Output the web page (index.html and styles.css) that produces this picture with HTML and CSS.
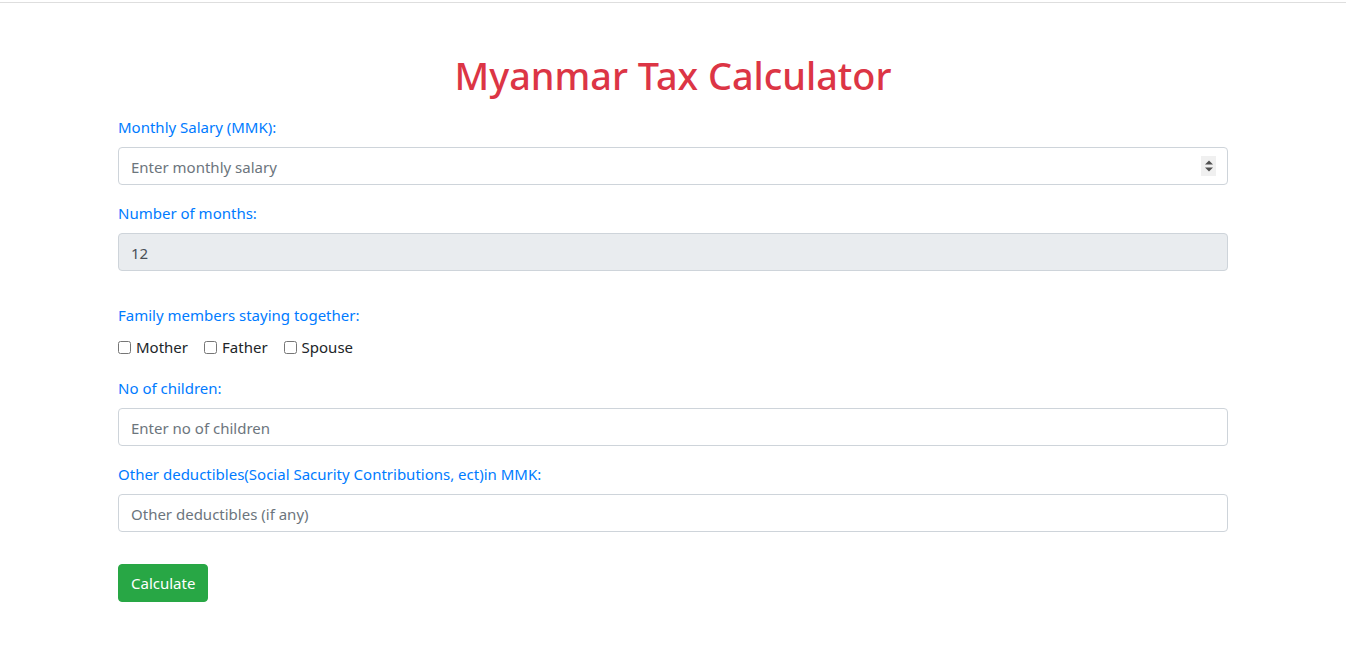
FILE: index.html
```html
<!DOCTYPE html>
<html lang="en">
<head>
<meta charset="utf-8">
<title>Myanmar Tax Calculator</title>
<link rel="stylesheet" href="styles.css">
</head>
<body>
<div class="topline"></div>
<div class="container">
  <h1 class="title">Myanmar Tax Calculator</h1>
  <form class="form">
    <div class="group">
      <label class="label" for="salary">Monthly Salary (MMK):</label>
      <div class="num-wrap">
        <input class="control" id="salary" type="text" placeholder="Enter monthly salary">
        <span class="spinner">
          <svg width="10" height="14" viewBox="0 0 10 14"><path d="M1 5.5 L5 1.5 L9 5.5 Z" fill="#505050"/><path d="M1 8.5 L5 12.5 L9 8.5 Z" fill="#505050"/></svg>
        </span>
      </div>
    </div>
    <div class="group group-wide">
      <label class="label" for="months">Number of months:</label>
      <input class="control control-readonly" id="months" type="text" value="12" readonly>
    </div>
    <div class="group">
      <label class="label">Family members staying together:</label>
      <div class="checks">
        <label class="check"><input type="checkbox" class="box"><span>Mother</span></label>
        <label class="check"><input type="checkbox" class="box"><span>Father</span></label>
        <label class="check"><input type="checkbox" class="box"><span>Spouse</span></label>
      </div>
    </div>
    <div class="group">
      <label class="label" for="children">No of children:</label>
      <input class="control" id="children" type="text" placeholder="Enter no of children">
    </div>
    <div class="group group-wide">
      <label class="label" for="other">Other deductibles(Social Sacurity Contributions, ect)in MMK:</label>
      <input class="control" id="other" type="text" placeholder="Other deductibles (if any)">
    </div>
    <button type="button" class="btn">Calculate</button>
  </form>
</div>
</body>
</html>
```

FILE: styles.css
```css
* { box-sizing: border-box; }
html, body { margin: 0; padding: 0; background: #fff; }
body {
  font-family: "Segoe UI", "Noto Sans", "Open Sans", sans-serif;
  font-size: 16px;
  line-height: 1.5;
  color: #212529;
}
.topline {
  height: 3px;
  border-bottom: 1px solid #dedede;
}
.container {
  width: 1140px;
  margin: 0 auto;
  padding: 0 15px;
}
.title {
  margin: 49px 0 16px;
  text-align: center;
  font-size: 37.8px;
  font-weight: 500;
  line-height: 47px;
  color: #dc3545;
}
.form { display: flex; flex-direction: column; align-items: stretch; }
.group { margin-bottom: 16px; display: flex; flex-direction: column; }
.group-wide { margin-bottom: 32px; }
.label {
  display: block;
  margin-bottom: 8px;
  color: #007bff;
  font-size: 15px;
  line-height: 24px;
}
.num-wrap { position: relative; }
.spinner {
  position: absolute;
  right: 12px;
  top: 9px;
  width: 15px;
  height: 20px;
  background: #f0f0f0;
  display: flex;
  align-items: center;
  justify-content: center;
}
.control {
  display: block;
  width: 100%;
  height: 38px;
  padding: 7px 12px 5px;
  font-family: inherit;
  font-size: 15px;
  line-height: 24px;
  color: #495057;
  background: #fff;
  border: 1px solid #ced4da;
  border-radius: 4px;
  outline: none;
}
.control::placeholder { color: #6c757d; opacity: 1; }
.control-readonly { background: #e9ecef; }
.checks { display: flex; align-items: center; height: 25px; }
.check {
  display: inline-flex;
  align-items: center;
  margin-right: 16px;
  font-size: 15px;
  color: #212529;
}
.box { margin: 0 5px 0 0; width: 13px; height: 13px; }
.btn {
  align-self: flex-start;
  height: 38px;
  padding: 6px 12px;
  font-family: inherit;
  font-size: 15px;
  line-height: 24px;
  color: #fff;
  background: #28a745;
  border: 1px solid #28a745;
  border-radius: 4px;
}
```
